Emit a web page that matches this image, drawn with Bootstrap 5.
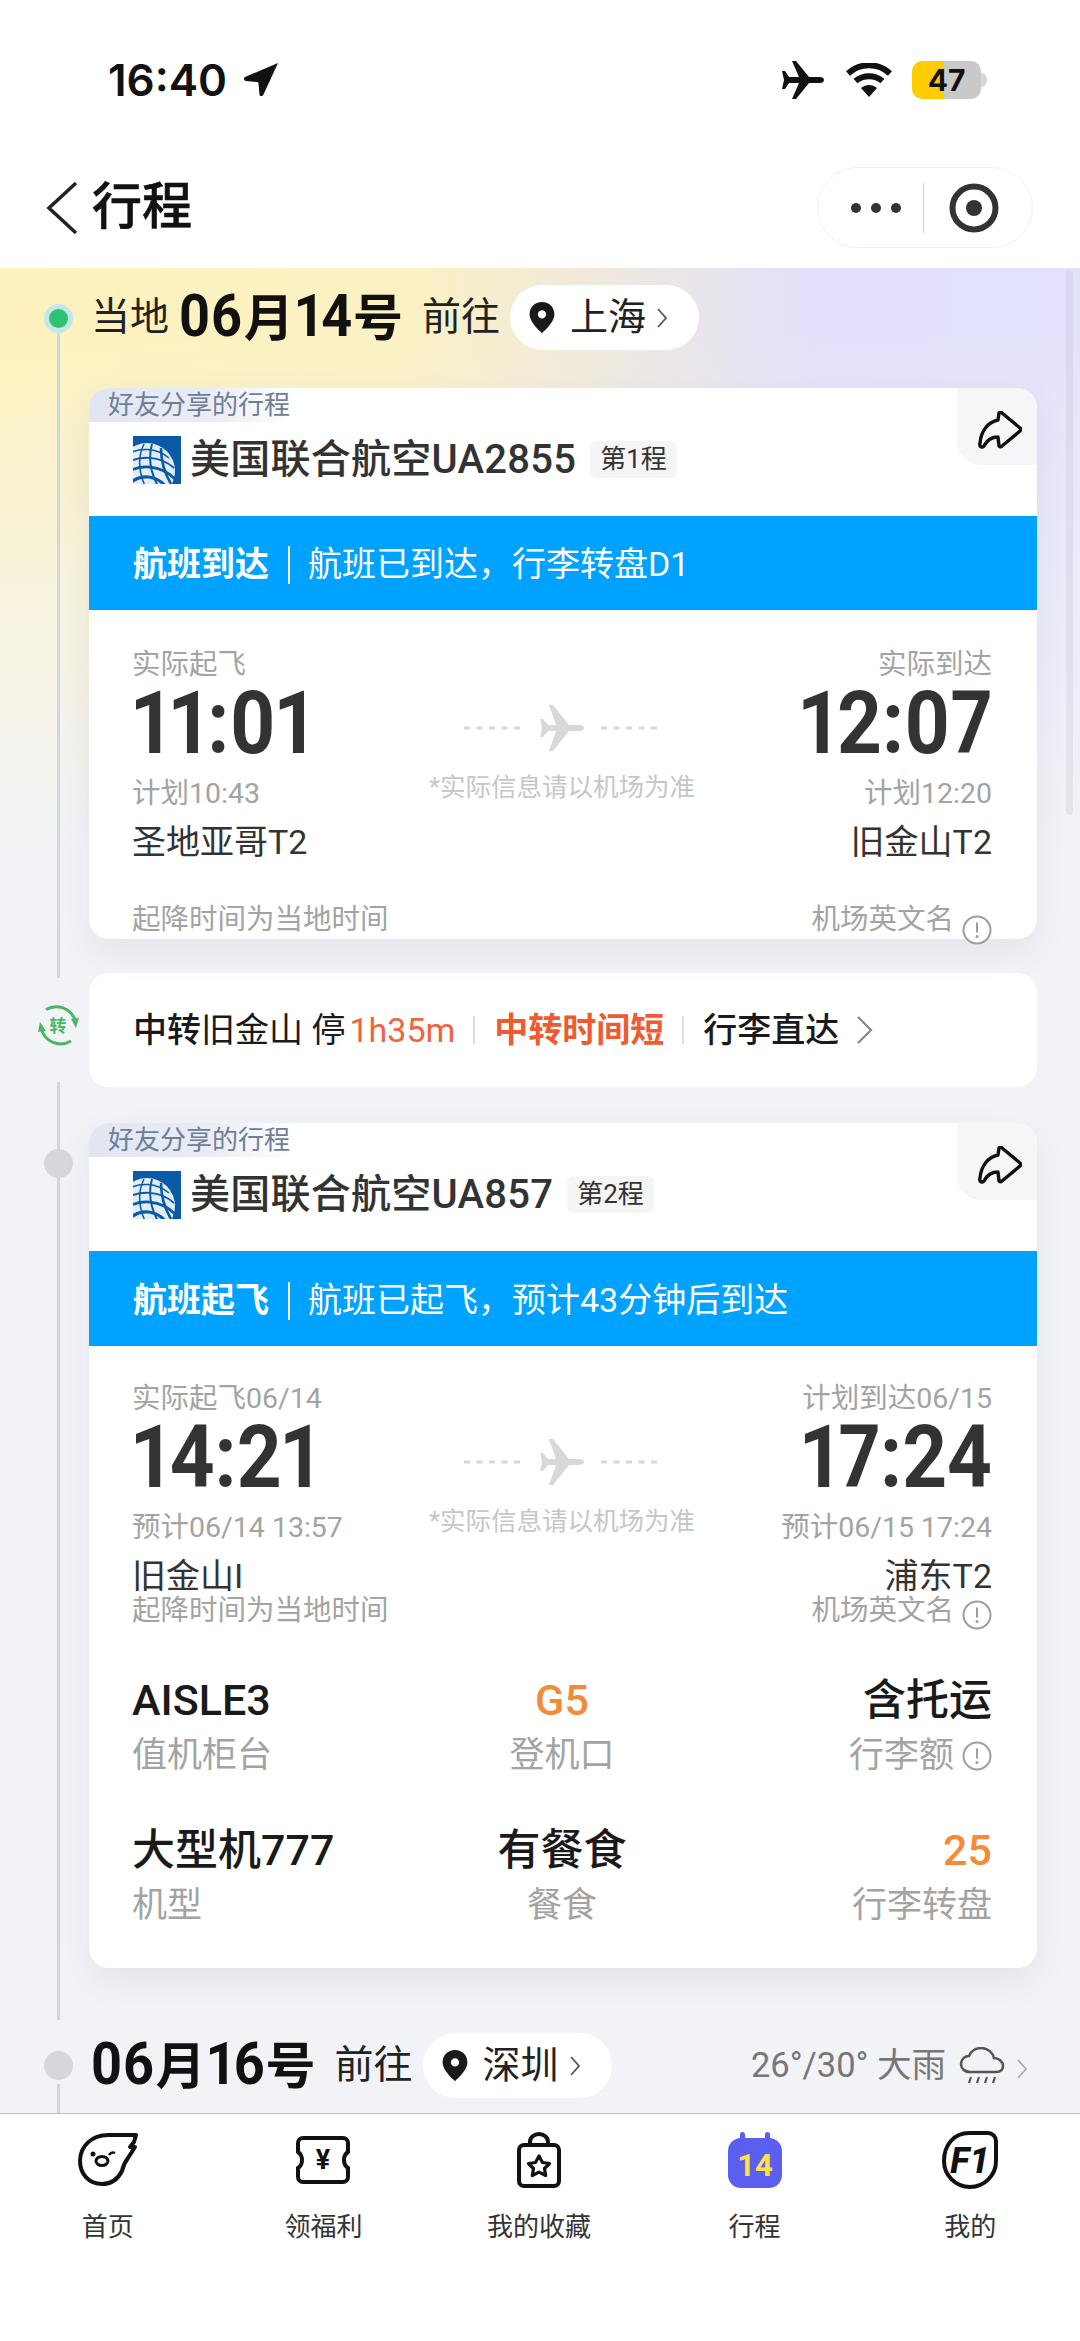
<!DOCTYPE html>
<html lang="zh-CN">
<head>
<meta charset="utf-8">
<title>行程</title>
<link href="https://cdn.jsdelivr.net/npm/bootstrap@5.3.0/dist/css/bootstrap.min.css" rel="stylesheet">
<script src="https://cdn.jsdelivr.net/npm/bootstrap@5.3.0/dist/js/bootstrap.bundle.min.js"></script>
<style>
html,body{margin:0;height:100%;background:#fff;}
body{font-family:Roboto,"Noto Sans CJK SC",sans-serif;color:#222;overflow:hidden;}
.phone{width:1080px;height:2341px;position:relative;overflow:hidden;}
.sbar{height:160px;padding:0 93px 0 108px;}
.sbar-time{font:600 44px/1 Inter,sans-serif;color:#111;}
.batt{width:69px;height:38px;border-radius:10px;margin-left:20px;background:linear-gradient(90deg,#ffcc00 46.4%,#c9c9c9 46.4%);font:700 30px/38px Inter,sans-serif;text-align:center;color:#111;}
.batt-cap{width:6px;height:14px;background:#d5d5d5;border-radius:0 6px 6px 0;}
.wifi-ico{margin-left:22px;}
.tbar{height:108px;padding:7px 47px 0 46px;}
.tbar-left{height:81px;}
.tbar-title{font-size:50px;font-weight:500;line-height:81px;margin-left:14px;color:#111;-webkit-text-stroke:.6px #111;}
.capsule{width:216px;height:81px;border:1px solid #f1f1f3;border-radius:41px;padding-left:33px;}
.cap-dot{width:10px;height:10px;border-radius:50%;background:#333;}
.cap-dots{gap:10px;}
.cap-div{width:1px;height:50px;background:#ccc;margin:0 25px 0 22px;}
.scene{height:1845px;overflow:hidden;background:linear-gradient(180deg,rgba(242,243,247,0) 0,rgba(242,243,247,0) 60px,rgba(242,243,247,.35) 220px,#f2f3f7 580px),linear-gradient(90deg,#fdf2bd 0,#fbf1c4 38%,#e2e0fb 76%,#e3e2fb 100%);}
.tl-row{display:flex;}
.tl-first{height:705px;}
.rail{width:30px;margin:0 16px 0 43px;flex:none;display:flex;flex-direction:column;align-items:center;}
.rail-line{width:3px;background:#d3d5da;flex:1 1 auto;}
.rail-line.first{background:#cdd9de;}
.rail-line.stub{flex:none;height:5px;}
.rail-line.stub2{flex:none;height:62px;}
.rail-line.tail{flex:none;height:40px;}
.hop-ico{margin:25px 0 34px;flex:none;}
.dot-now{width:29px;height:29px;border-radius:50%;background:#c3e7ea;display:flex;align-items:center;justify-content:center;flex:none;margin-top:36px;}
.dot-now i{display:block;width:19px;height:19px;border-radius:50%;background:#2ec36e;}
.dot-gray{width:29px;height:29px;border-radius:50%;background:#d5d7dc;flex:none;}
.dot-gray.last{margin:31px 0 4px;}
.tl-body{width:948px;flex:none;}
.tl-body.second{padding:36px 0 52px;}
.date-row{height:65px;margin-top:17px;font-size:39px;color:#222;white-space:nowrap;}
.date-row.next{margin-top:13px;}
.date-lead{margin-left:2px;}
.date-big{font-size:50px;font-weight:700;color:#111;margin:0 19px 0 8px;line-height:65px;}
.date-big.nomg{margin-left:0;}
.date-big b{display:inline-block;font:700 60px/65px Roboto,sans-serif;font-variant-numeric:proportional-nums;transform:scaleX(.9);margin:0 -2px;}
.city-pill{height:65px;border-radius:33px;background:#fff;padding:0 32px 0 19px;margin-left:10px;}
.city-pill span{margin:0 11px 0 15px;color:#222;font-size:38px;}
.wx{font-size:34.5px;color:#777;}
.wx-ico{margin-left:13px;}
.wx-go{margin:6px 10px 0 12px;}
.fcard{background:#fff;border:0;border-radius:20px;box-shadow:0 14px 34px rgba(70,80,110,.08);position:relative;}
.fcard.one{margin-top:38px;height:551px;}
.fc-head{height:128px;padding:48px 0 0 44px;}
.fc-tag{position:absolute;left:0;top:0;height:34px;width:206px;padding-left:19px;font-size:26px;line-height:34px;color:#6f7d99;border-radius:20px 0 0 0;background:linear-gradient(90deg,#e0e6f1,#e9edf5 60%,#fff);}
.fc-share{position:absolute;right:0;top:0;width:80px;height:77px;background:#f5f6f8;border-radius:0 20px 0 24px;display:flex;align-items:center;justify-content:flex-start;padding:6px 0 0 21px;}
.fc-name{font-size:40px;font-weight:500;line-height:48px;color:#333;margin-left:9px;letter-spacing:.25px;}
.fc-leg{font-size:26px;line-height:37px;height:37px;padding:0 10px;background:#f5f5f5;border-radius:6px;margin:5px 0 0 14px;color:#333;}
.fc-band{height:95px;padding:4px 0 0 44px;background:#00a2ff;color:#fff;font-size:34px;}
.fc-band strong{font-weight:700;}
.fc-band i{display:block;width:2px;height:38px;background:#fff;margin:0 18px 0 19px;}
.fc-main{padding:33px 45px 0 43px;}
.one .fc-main{padding-top:35px;}
.fl-col{flex:1 1 0;min-width:0;white-space:nowrap;}
.fl-label,.fl-plan{font-size:28.5px;line-height:40px;color:#a3a3a3;}
.fl-time{font:700 87px/76px Roboto,sans-serif;font-variant-numeric:proportional-nums;color:#333;transform:scaleX(.9);transform-origin:0 50%;}
.fl-end .fl-time{transform-origin:100% 50%;}
.fl-plan{margin-top:13px;}
.fl-port{font-size:34px;line-height:42px;margin-top:7px;color:#333;}
.fl-mid{width:280px;flex:none;text-align:center;padding-top:60px;}
.fl-note{font-size:25.5px;line-height:34px;margin-top:19px;color:#c6c6c6;white-space:nowrap;}
.fl-foot{font-size:28.5px;line-height:28px;color:#a3a3a3;}
.fl-foot.far{line-height:38px;margin-top:38px;}
.fl-foot.far .tip{margin-top:14px;margin-bottom:-10px;}
.tip{margin-left:8px;flex:none;}
.tip-low{margin-top:3px;}
.info-grid{padding:45px 45px 42px 43px;}
.info-grid .row+.row{margin-top:49px;}
.iv{font-size:43px;font-weight:500;line-height:50px;color:#1a1a1a;}
.iv.hot{color:#f28c38;}
.il{font-size:35px;line-height:40px;margin-top:11px;color:#a3a3a3;}
.hop{height:114px;background:#fff;border-radius:20px;padding-left:44px;font-size:34px;color:#1a1a1a;white-space:nowrap;}
.hop em{font-style:normal;color:#f0643c;}
.hop strong{font-weight:700;color:#f05a30;}
.hop-div{width:2px;height:28px;background:#ddd;margin:0 19px 0 18px;}
.hop b{font-weight:500;}
.tabs{height:228px;background:#fff;border-top:1px solid #bdbdbd;padding-top:17px;}
.tab{width:215.6px;flex:none;text-align:center;font-size:26px;color:#333;}
.tab-ico{height:58px;display:flex;align-items:center;justify-content:center;margin-bottom:20px;}
.tab-lab{line-height:36px;}
.sc-thumb{position:absolute;right:7px;top:270px;width:7px;height:545px;border-radius:4px;background:rgba(170,170,190,.18);}
</style>
</head>
<body>
<svg width="0" height="0" class="d-none" aria-hidden="true"><defs><clipPath id="gl"><rect width="48" height="48"/></clipPath></defs></svg>
<div class="phone d-flex flex-column">
  <div class="sbar d-flex align-items-center justify-content-between">
    <div class="d-flex align-items-center">
      <span class="sbar-time">16:40</span>
      <svg class="ms-3" width="36" height="36" viewBox="0 0 36 36"><path d="M35 1 2 15c-2 1-1 4 1 4l11 1c1 0 1.500.5 1.500 1.500l1 11c.3 2 3 2 4 0Z" fill="#111"/></svg>
    </div>
    <div class="d-flex align-items-center">
      <svg width="42" height="38" viewBox="0 0 42 38"><path d="M42 19c0-2-2-3-4-3H27L14 0h-4l7 16H7L3 10H0l2 9-2 9h3l4-6h10l-7 16h4l13-16h11c2 0 4-1 4-3Z" fill="#111"/></svg>
      <svg class="wifi-ico" width="46" height="34" viewBox="0 0 46 34"><path d="M2 10.500C14-.5 32-.5 44 10.500M9.500 18C17 11.500 29 11.500 36.500 18" fill="none" stroke="#111" stroke-width="6"/><path d="M15 25c5-4 11-4 16 0l-8 9Z" fill="#111"/></svg>
      <div class="batt">47</div>
      <div class="batt-cap"></div>
    </div>
  </div>
  <div class="tbar d-flex justify-content-between">
    <div class="tbar-left d-flex align-items-center">
      <svg width="32" height="54" viewBox="0 0 32 54"><path d="M30 2 3 27l27 25" fill="none" stroke="#222" stroke-width="3.500"/></svg>
      <span class="tbar-title">行程</span>
    </div>
    <div class="capsule d-flex align-items-center">
      <div class="cap-dots d-flex"><span class="cap-dot"></span><span class="cap-dot"></span><span class="cap-dot"></span></div>
      <div class="cap-div"></div>
      <svg width="50" height="50" viewBox="0 0 50 50"><circle cx="25" cy="25" r="21.500" fill="none" stroke="#333" stroke-width="6"/><circle cx="25" cy="25" r="8" fill="#333"/></svg>
    </div>
  </div>

  <main class="scene">
    <section class="tl-row tl-first">
      <div class="rail"><span class="dot-now"><i></i></span><span class="rail-line first"></span></div>
      <div class="tl-body">
        <div class="date-row d-flex align-items-center">
          <span class="date-lead">当地</span>
          <span class="date-big"><b>06</b>月<b>14</b>号</span>
          <span>前往</span>
          <span class="city-pill d-flex align-items-center">
            <svg width="26" height="31" viewBox="0 0 24 30"><path fill-rule="evenodd" d="M12 0C5 0 0 5 0 12c0 8 12 18 12 18s12-10 12-18C24 5 19 0 12 0Zm0 8a4 4 0 1 1 0 8 4 4 0 0 1 0-8Z" fill="#1a1a1a"/></svg>
            <span>上海</span>
            <svg width="10" height="22" viewBox="0 0 10 22"><path d="m1 2 8 9-8 9" fill="none" stroke="#555" stroke-width="1.800"/></svg>
          </span>
        </div>
        <article class="card fcard one">
          <div class="fc-tag">好友分享的行程</div>
          <div class="fc-share"><svg width="44" height="38" viewBox="0 0 44 38"><path d="M21 2c1-1 2-1 3 0l18 15c1 1 1 2 0 3L24 35c-1 1-2 1-3 0l-1-9c-6 0-11 3-14 9-2 2-5 1-4-3 1-12 8-21 18-23Z" fill="none" stroke="#111" stroke-width="3.400" stroke-linejoin="round"/></svg></div>
          <header class="fc-head d-flex align-items-start">
            <svg width="48" height="48" viewBox="0 0 48 48"><rect width="48" height="48" fill="#0b5aa8"/><g clip-path="url(#gl)"><circle cx="14" cy="35" r="28" fill="#e3edf5"/><g fill="none" stroke="#0b5aa8"><path stroke-width="1.500" d="M-8 20C6 10 24 12 36 22"/><path stroke-width="2" d="M-10 29C6 18 28 20 41 32"/><path stroke-width="2.600" d="M-8 38C6 27 28 29 42 43"/><path stroke-width="3.200" d="M-4 48C8 37 24 39 34 52"/><path stroke-width="1.500" d="M11 8C5 20 5 34 12 50"/><path stroke-width="2" d="M19 8C15 22 18 38 26 52"/><path stroke-width="2.600" d="M28 12C28 26 32 38 38 48"/></g></g></svg>
            <span class="fc-name">美国联合航空UA2855</span>
            <span class="fc-leg">第1程</span>
          </header>
          <div class="fc-band d-flex align-items-center"><strong>航班到达</strong><i></i><span>航班已到达&#xFF0C;行李转盘D1</span></div>
          <div class="fc-main">
            <div class="d-flex">
              <div class="fl-col">
                <div class="fl-label">实际起飞</div>
                <div class="fl-time">11:01</div>
                <div class="fl-plan">计划10:43</div>
                <div class="fl-port">圣地亚哥T2</div>
              </div>
              <div class="fl-mid">
                <svg width="197" height="46" viewBox="0 0 197 46"><path d="M0 23h60M137 23h60" stroke="#d8d8d8" stroke-width="3" stroke-dasharray="6 6.500"/><path d="M120 23c0-2-2-3-4-3h-11L89 0h-4l7 20H84l-5-6h-3l2 9-2 9h3l5-6h8l-7 20h4l16-20h11c2 0 4-1 4-3Z" fill="#d8d8d8"/></svg>
                <div class="fl-note">*实际信息请以机场为准</div>
              </div>
              <div class="fl-col fl-end text-end">
                <div class="fl-label">实际到达</div>
                <div class="fl-time">12:07</div>
                <div class="fl-plan">计划12:20</div>
                <div class="fl-port">旧金山T2</div>
              </div>
            </div>
            <div class="fl-foot far d-flex justify-content-between">
              <span>起降时间为当地时间</span>
              <span class="d-flex"><span>机场英文名</span><svg class="tip" width="30" height="30" viewBox="0 0 30 30"><circle cx="15" cy="15" r="13.500" fill="#fff" stroke="#9e9e9e" stroke-width="2"/><path d="M15 7.500v10" stroke="#9e9e9e" stroke-width="2"/><circle cx="15" cy="21.500" r="1.500" fill="#9e9e9e"/></svg></span>
            </div>
          </div>
        </article>
      </div>
    </section>

    <section class="tl-row">
      <div class="rail">
        <span class="rail-line stub"></span>
        <svg class="hop-ico" width="46" height="45" viewBox="0 0 46 45"><path d="M11 6.500A20 20 0 0 1 40 17M36 38a20 20 0 0 1-29-10" fill="none" stroke="#4cb763" stroke-width="3"/><path d="m36 16 8-1-3 10ZM11 28l-8 1 2-10Z" fill="#4cb763"/><text x="23" y="29" text-anchor="middle" font-size="17" font-weight="700" fill="#4cb763" font-family="Noto Sans CJK SC">转</text></svg>
        <span class="rail-line stub"></span>
      </div>
      <div class="tl-body">
        <div class="hop d-flex align-items-center">
          <span><b>中转</b>旧金山 停</span><em class="ms-1">1h35m</em><span class="hop-div"></span><strong>中转时间短</strong><span class="hop-div"></span><b>行李直达</b>
          <svg class="ms-3" width="20" height="30" viewBox="0 0 20 30"><path d="m3 2 13 13L3 28" fill="none" stroke="#888" stroke-width="2.200"/></svg>
        </div>
      </div>
    </section>

    <section class="tl-row">
      <div class="rail">
        <span class="rail-line stub2"></span>
        <span class="dot-gray"></span>
        <span class="rail-line"></span>
      </div>
      <div class="tl-body second">
        <article class="card fcard">
          <div class="fc-tag">好友分享的行程</div>
          <div class="fc-share"><svg width="44" height="38" viewBox="0 0 44 38"><path d="M21 2c1-1 2-1 3 0l18 15c1 1 1 2 0 3L24 35c-1 1-2 1-3 0l-1-9c-6 0-11 3-14 9-2 2-5 1-4-3 1-12 8-21 18-23Z" fill="none" stroke="#111" stroke-width="3.400" stroke-linejoin="round"/></svg></div>
          <header class="fc-head d-flex align-items-start">
            <svg width="48" height="48" viewBox="0 0 48 48"><rect width="48" height="48" fill="#0b5aa8"/><g clip-path="url(#gl)"><circle cx="14" cy="35" r="28" fill="#e3edf5"/><g fill="none" stroke="#0b5aa8"><path stroke-width="1.500" d="M-8 20C6 10 24 12 36 22"/><path stroke-width="2" d="M-10 29C6 18 28 20 41 32"/><path stroke-width="2.600" d="M-8 38C6 27 28 29 42 43"/><path stroke-width="3.200" d="M-4 48C8 37 24 39 34 52"/><path stroke-width="1.500" d="M11 8C5 20 5 34 12 50"/><path stroke-width="2" d="M19 8C15 22 18 38 26 52"/><path stroke-width="2.600" d="M28 12C28 26 32 38 38 48"/></g></g></svg>
            <span class="fc-name">美国联合航空UA857</span>
            <span class="fc-leg">第2程</span>
          </header>
          <div class="fc-band d-flex align-items-center"><strong>航班起飞</strong><i></i><span>航班已起飞&#xFF0C;预计43分钟后到达</span></div>
          <div class="fc-main">
            <div class="d-flex">
              <div class="fl-col">
                <div class="fl-label">实际起飞06/14</div>
                <div class="fl-time">14:21</div>
                <div class="fl-plan">预计06/14 13:57</div>
                <div class="fl-port">旧金山I</div>
              </div>
              <div class="fl-mid">
                <svg width="197" height="46" viewBox="0 0 197 46"><path d="M0 23h60M137 23h60" stroke="#d8d8d8" stroke-width="3" stroke-dasharray="6 6.500"/><path d="M120 23c0-2-2-3-4-3h-11L89 0h-4l7 20H84l-5-6h-3l2 9-2 9h3l5-6h8l-7 20h4l16-20h11c2 0 4-1 4-3Z" fill="#d8d8d8"/></svg>
                <div class="fl-note">*实际信息请以机场为准</div>
              </div>
              <div class="fl-col fl-end text-end">
                <div class="fl-label">计划到达06/15</div>
                <div class="fl-time">17:24</div>
                <div class="fl-plan">预计06/15 17:24</div>
                <div class="fl-port">浦东T2</div>
              </div>
            </div>
            <div class="fl-foot d-flex justify-content-between">
              <span>起降时间为当地时间</span>
              <span class="d-flex align-items-start"><span>机场英文名</span><svg class="tip tip-low" width="30" height="30" viewBox="0 0 30 30"><circle cx="15" cy="15" r="13.500" fill="#fff" stroke="#9e9e9e" stroke-width="2"/><path d="M15 7.500v10" stroke="#9e9e9e" stroke-width="2"/><circle cx="15" cy="21.500" r="1.500" fill="#9e9e9e"/></svg></span>
            </div>
          </div>
          <div class="info-grid">
            <div class="row g-0">
              <div class="col-4"><div class="iv">AISLE3</div><div class="il">值机柜台</div></div>
              <div class="col-4 text-center"><div class="iv hot">G5</div><div class="il">登机口</div></div>
              <div class="col-4 text-end"><div class="iv">含托运</div><div class="il d-flex justify-content-end align-items-center"><span>行李额</span><svg class="tip" width="30" height="30" viewBox="0 0 30 30"><circle cx="15" cy="15" r="13.500" fill="#fff" stroke="#9e9e9e" stroke-width="2"/><path d="M15 7.500v10" stroke="#9e9e9e" stroke-width="2"/><circle cx="15" cy="21.500" r="1.500" fill="#9e9e9e"/></svg></div></div>
            </div>
            <div class="row g-0">
              <div class="col-4"><div class="iv">大型机777</div><div class="il">机型</div></div>
              <div class="col-4 text-center"><div class="iv">有餐食</div><div class="il">餐食</div></div>
              <div class="col-4 text-end"><div class="iv hot">25</div><div class="il">行李转盘</div></div>
            </div>
          </div>
        </article>
      </div>
    </section>

    <section class="tl-row">
      <div class="rail">
        <span class="dot-gray last"></span>
        <span class="rail-line tail"></span>
      </div>
      <div class="tl-body">
        <div class="date-row next d-flex align-items-center">
          <span class="date-big nomg"><b>06</b>月<b>16</b>号</span>
          <span>前往</span>
          <span class="city-pill d-flex align-items-center">
            <svg width="26" height="31" viewBox="0 0 24 30"><path fill-rule="evenodd" d="M12 0C5 0 0 5 0 12c0 8 12 18 12 18s12-10 12-18C24 5 19 0 12 0Zm0 8a4 4 0 1 1 0 8 4 4 0 0 1 0-8Z" fill="#1a1a1a"/></svg>
            <span>深圳</span>
            <svg width="10" height="22" viewBox="0 0 10 22"><path d="m1 2 8 9-8 9" fill="none" stroke="#555" stroke-width="1.800"/></svg>
          </span>
          <span class="wx ms-auto d-flex align-items-center">
            <span>26°/30° 大雨</span>
            <svg class="wx-ico" width="46" height="38" viewBox="0 0 46 38"><path d="M11 25C5 25 2 21 2 17c0-5 4-8 8-8 2-5 7-8 12-8 7 0 12 5 13 10 5 0 9 4 9 8s-3 6-7 6Z" fill="none" stroke="#555" stroke-width="2.500"/><path d="m12 30-2 6M20 30l-2 6M28 30l-2 6M36 30l-2 6" stroke="#555" stroke-width="2.200"/></svg>
            <svg class="wx-go" width="10" height="22" viewBox="0 0 10 22"><path d="m1 2 8 9-8 9" fill="none" stroke="#aaa" stroke-width="1.800"/></svg>
          </span>
        </div>
      </div>
    </section>
  </main>

  <nav class="tabs d-flex">
    <div class="tab"><div class="tab-ico"><svg width="60" height="54" viewBox="0 0 60 54"><path d="M58 2 56 9l-4 5h5l-7 11c-3 4-5 8-6 13-4 8-11 13-20 13C11 51 2 41 2 28 2 13 14 2 30 2Z" fill="none" stroke="#111" stroke-width="4" stroke-linejoin="round"/><circle cx="15" cy="21" r="2.500" fill="#111"/><path d="M31 22c2-3 4-3 6-2" fill="none" stroke="#111" stroke-width="2.500"/><ellipse cx="24" cy="28" rx="6" ry="4.500" fill="none" stroke="#111" stroke-width="3"/></svg></div><div class="tab-lab">首页</div></div>
    <div class="tab"><div class="tab-ico"><svg width="54" height="48" viewBox="0 0 54 48"><path d="M7 2h40a5 5 0 0 1 5 5v9c-3 2-4 5-4 8s1 6 4 8v9a5 5 0 0 1-5 5H7a5 5 0 0 1-5-5v-9c3-2 4-5 4-8s-1-6-4-8V7a5 5 0 0 1 5-5Z" fill="none" stroke="#111" stroke-width="4"/><text x="27" y="33" text-anchor="middle" font-size="27" font-weight="700" fill="#111" font-family="Roboto">¥</text></svg></div><div class="tab-lab">领福利</div></div>
    <div class="tab"><div class="tab-ico"><svg width="44" height="56" viewBox="0 0 44 56"><rect x="2" y="13" width="40" height="41" rx="5" fill="none" stroke="#111" stroke-width="4"/><path d="M13 13V10a9 8 0 0 1 18 0v3" fill="none" stroke="#111" stroke-width="4"/><path d="m22 24 3.500 6.500 7 1-5 5 1.200 7-6.700-3.400-6.700 3.400 1.200-7-5-5 7-1Z" fill="none" stroke="#111" stroke-width="3.200" stroke-linejoin="round"/></svg></div><div class="tab-lab">我的收藏</div></div>
    <div class="tab"><div class="tab-ico"><svg width="54" height="56" viewBox="0 0 54 56"><rect x="0" y="6" width="54" height="50" rx="13" fill="#5b5fef"/><rect x="12" y="0" width="5" height="12" rx="2.500" fill="#5b5fef"/><rect x="37" y="0" width="5" height="12" rx="2.500" fill="#5b5fef"/><text x="27" y="44" text-anchor="middle" font-size="31" font-weight="700" fill="#ffe14d" font-family="Roboto">14</text></svg></div><div class="tab-lab">行程</div></div>
    <div class="tab"><div class="tab-ico"><svg width="56" height="58" viewBox="0 0 56 58"><path d="M27 2h19a8 8 0 0 1 8 8v20a26 26 0 0 1-52 0C2 14 12 2 27 2Z" fill="none" stroke="#111" stroke-width="4"/><text x="28" y="42" text-anchor="middle" font-size="36" font-weight="800" font-style="italic" fill="#111" font-family="Roboto">F1</text></svg></div><div class="tab-lab">我的</div></div>
  </nav>
  <div class="sc-thumb"></div>
</div>
</body>
</html>
